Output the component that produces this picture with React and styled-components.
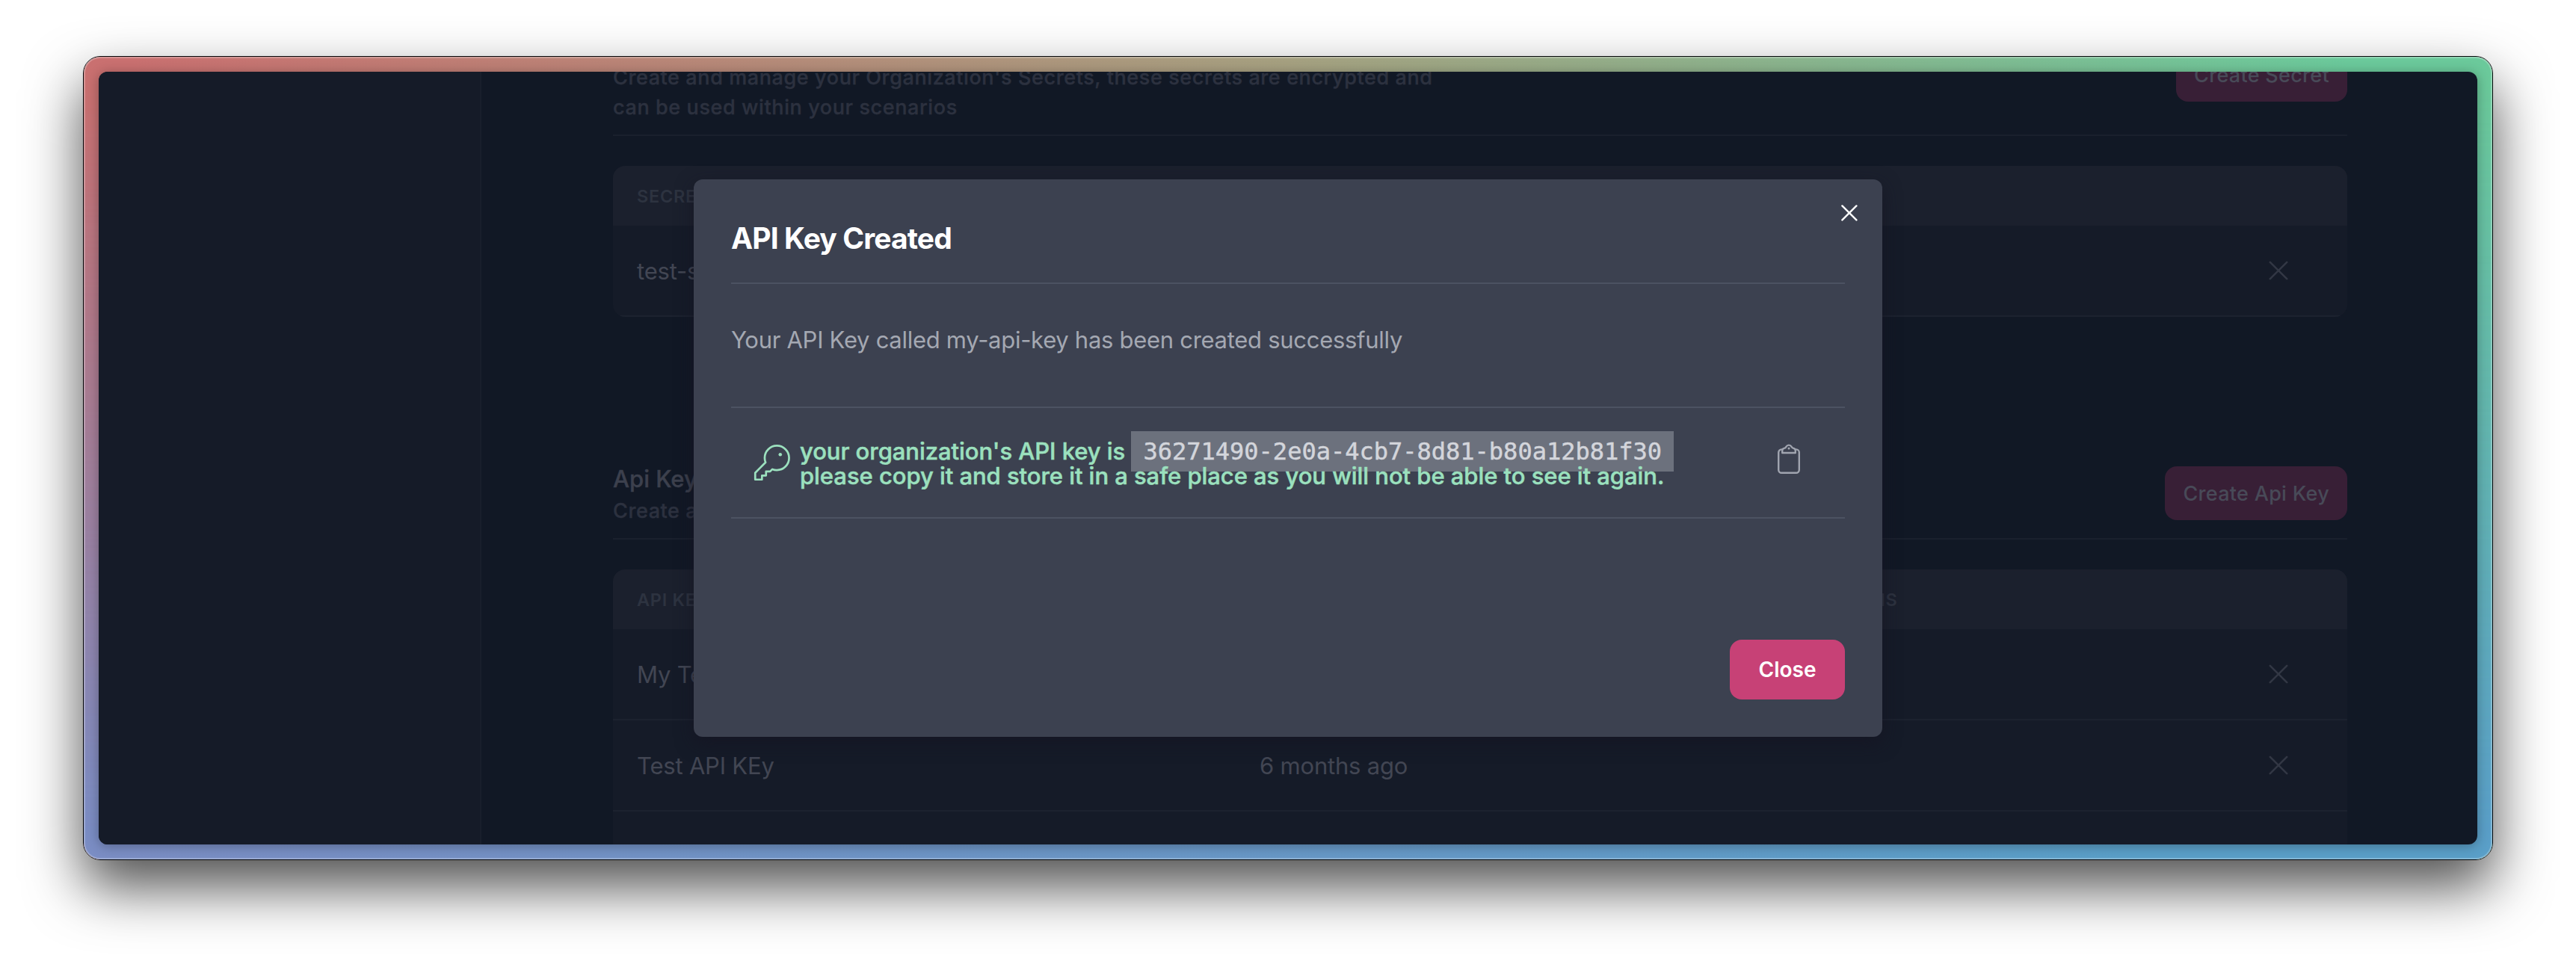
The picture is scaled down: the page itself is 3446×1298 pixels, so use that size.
import React from "react";
import styled, { createGlobalStyle } from "styled-components";

const GlobalStyle = createGlobalStyle`
  *, *::before, *::after { box-sizing: border-box; }
  body {
    margin: 0;
    background: #fff;
    font-family: Inter, "Liberation Sans", sans-serif;
    -webkit-font-smoothing: antialiased;
  }
`;

const Desktop = styled.div`
  width: 3446px;
  height: 1298px;
  padding: 75px 111px 147px;
  overflow: hidden;
`;

const Window = styled.div`
  position: relative;
  height: 1076px;
  padding: 20px;
  border: 1px solid #07080a;
  border-radius: 23px;
  background: linear-gradient(90deg, #c97070 0%, #c97070 2%, #a5a080 50%, #6bc99b 94%, #6bc99b 100%) padding-box;
  box-shadow: 0 36px 76px rgba(0, 0, 0, 0.69);

  &::before {
    content: "";
    position: absolute;
    inset: 0;
    border-radius: 22px;
    background: linear-gradient(90deg, #7b8dc4, #5a9fc8 85%);
    mask-image: linear-gradient(180deg, transparent 4%, #000 96%);
  }

  &::after {
    content: "";
    position: absolute;
    inset: 0;
    border-radius: 22px;
    box-shadow: inset 0 0 0 2px rgba(255, 255, 255, 0.24);
  }
`;

const Screen = styled.div`
  position: relative;
  z-index: 1;
  display: flex;
  height: 1034px;
  border-radius: 12px;
  overflow: hidden;
  background: #111825;
`;

const ScreenShadow = styled.div`
  position: relative;
  z-index: 1;
  border-radius: 12px;
  box-shadow: 0 2px 16px rgba(0, 0, 0, 0.3);
`;

const Sidebar = styled.aside`
  flex: none;
  width: 512px;
  border-right: 2px solid #191f2c;
  background: #151b28;
`;

const Content = styled.main`
  flex: 1;
  min-width: 0;
  display: flex;
  flex-direction: column;
  gap: 192px;
  margin-top: -60px;
  padding: 0 174px 0 176px;
`;

const Section = styled.section`
  display: flex;
  flex-direction: column;
  gap: 40px;
`;

const SectionHeader = styled.header`
  display: flex;
  align-items: center;
  justify-content: space-between;
  padding-bottom: 16px;
  border-bottom: 2px solid #1a202d;
`;

const SectionIntro = styled.div`
  width: 1135px;
`;

const SectionTitle = styled.h3`
  height: 48px;
  margin: 0;
  font-size: 31px;
  font-weight: 500;
  line-height: 50px;
  -webkit-text-stroke: 0.4px;
  color: #3c404d;
`;

const SectionText = styled.p`
  margin: 0;
  font-size: 27px;
  font-weight: 500;
  line-height: 40px;
  letter-spacing: 0.6px;
  -webkit-text-stroke: 0.4px;
  color: #2c313f;
`;

const CreateButton = styled.button`
  flex: none;
  height: 72px;
  padding: 1px 24px 0;
  border: 0;
  border-radius: 16px;
  background: #381f36;
  color: #484a58;
  font: 500 27px/40px Inter, sans-serif;
  letter-spacing: 0.3px;
`;

const Table = styled.div`
  border-radius: 16px;
  overflow: hidden;
  background: #151b28;
`;

const TableRow = styled.div`
  display: grid;
  grid-template-columns: 833px 742px 1fr 36px;
  align-items: center;
  height: 122px;
  padding: 1px 74px 0 32px;
  border-bottom: 2px solid #1c222f;
  font-size: 31px;
  letter-spacing: -0.2px;
  color: #424653;
`;

const TableHead = styled(TableRow)`
  height: 80px;
  padding-top: 0;
  border-bottom: 0;
  background: #1b202d;
  font-size: 23.5px;
  font-weight: 600;
  letter-spacing: 0.7px;
  text-transform: uppercase;
  color: #2d3340;
`;

const RowIcon = styled.svg`
  grid-column: 4;
  width: 36px;
  height: 36px;
  margin-top: -1px;
  fill: none;
  stroke: #323744;
  stroke-width: 2.6;
  stroke-linecap: round;
`;

const Overlay = styled.div`
  position: absolute;
  inset: 0;
  display: flex;
  align-items: center;
  justify-content: center;
`;

const Modal = styled.div`
  position: relative;
  display: flex;
  flex-direction: column;
  width: 1590px;
  height: 746px;
  padding: 50px;
  border-radius: 12px;
  background: #3c4150;
  box-shadow: 0 8px 24px rgba(22, 20, 34, 0.7);
`;

const ModalTitle = styled.h2`
  height: 90px;
  margin: 0;
  border-bottom: 2px solid #4c5262;
  font-size: 39px;
  font-weight: 700;
  line-height: 58px;
  letter-spacing: -0.88px;
  color: #fff;
`;

const ModalText = styled.p`
  margin: 51px 0 65px;
  font-size: 31px;
  line-height: 48px;
  letter-spacing: -0.29px;
  color: #a4a8b2;
`;

const KeyPanel = styled.div`
  display: flex;
  align-items: center;
  height: 150px;
  padding: 2px 60px 0 25px;
  border: solid #4c5262;
  border-width: 2px 0;
`;

const KeyIcon = styled.svg`
  flex: none;
  width: 58px;
  height: 58px;
  margin-right: 9px;
  fill: none;
  stroke: #9be0be;
  stroke-width: 12;
  stroke-linecap: round;
  stroke-linejoin: round;
`;

const KeyText = styled.p`
  flex: 1;
  margin: 0;
  font-size: 31px;
  font-weight: 500;
  line-height: 33px;
  letter-spacing: -0.05px;
  -webkit-text-stroke: 0.5px;
  color: #9be0be;
`;

const KeyValue = styled.code`
  padding: 8px 16px;
  background: #6c717d;
  color: #d3d5db;
  font: 400 32px/1 "DejaVu Sans Mono", monospace;
  line-height: 0;
  letter-spacing: 0;
`;

const ClipboardIcon = styled.svg`
  flex: none;
  width: 30px;
  height: 40px;
  margin-bottom: 13px;
  fill: none;
  stroke: #a0a4af;
  stroke-width: 2.4;
  stroke-linejoin: round;
`;

const DismissIcon = styled.svg`
  position: absolute;
  top: 34px;
  right: 33px;
  width: 22px;
  height: 22px;
  stroke: #fff;
  stroke-width: 2.4;
  stroke-linecap: round;
`;

const CloseButton = styled.button`
  align-self: flex-end;
  width: 154px;
  height: 80px;
  margin-top: auto;
  border: 0;
  border-radius: 16px;
  background: #c74176;
  color: #fff;
  font: 600 28px/40px Inter, sans-serif;
`;

const secrets = [{ name: "test-secret" }];
const apiKeys = [
  { name: "My Test Key", created: "6 months ago" },
  { name: "Test API KEy", created: "6 months ago" },
];

function RemoveIcon() {
  return (
    <RowIcon viewBox="0 0 36 36">
      <path d="M6.8 6.8l22.4 22.4M29.2 6.8L6.8 29.2" />
    </RowIcon>
  );
}

function ResourceSection({ title, text, action, columns, rows, children }) {
  return (
    <Section>
      <SectionHeader>
        <SectionIntro>
          <SectionTitle>{title}</SectionTitle>
          <SectionText>{text}</SectionText>
        </SectionIntro>
        <CreateButton>{action}</CreateButton>
      </SectionHeader>
      <Table>
        <TableHead>
          {columns.map((column) => (
            <span key={column}>{column}</span>
          ))}
        </TableHead>
        {rows.map((row) => (
          <TableRow key={row.name}>
            <span>{row.name}</span>
            <span>{row.created}</span>
            <RemoveIcon />
          </TableRow>
        ))}
        {children}
      </Table>
    </Section>
  );
}

export default function App() {
  return (
    <>
      <GlobalStyle />
      <Desktop>
        <Window>
          <ScreenShadow>
            <Screen>
              <Sidebar />
              <Content>
                <ResourceSection
                  text="Create and manage your Organization's Secrets, these secrets are encrypted and can be used within your scenarios"
                  action="Create Secret"
                  columns={["Secret"]}
                  rows={secrets}
                />
                <ResourceSection
                  title="Api Keys"
                  text="Create and manage your Organization's Api Keys"
                  action="Create Api Key"
                  columns={["API Key", "Created", "Actions"]}
                  rows={apiKeys}
                >
                  <TableRow />
                </ResourceSection>
              </Content>
              <Overlay>
                <Modal role="dialog">
                  <DismissIcon viewBox="0 0 22 22">
                    <path d="M1.4 1.4l19 19M20.4 1.4l-19 19" />
                  </DismissIcon>
                  <ModalTitle>API Key Created</ModalTitle>
                  <ModalText>
                    Your API Key called my-api-key has been created successfully
                  </ModalText>
                  <KeyPanel>
                    <KeyIcon viewBox="0 0 256 256">
                      <path d="M93.2 122.8A70.3 70.3 0 0 1 88 96a72 72 0 1 1 72 72 70.3 70.3 0 0 1-26.8-5.2L120 176H96v24H72v24H32v-40z" />
                      <circle cx="180" cy="76" r="10" fill="#9be0be" stroke="none" />
                    </KeyIcon>
                    <KeyText>
                      your organization's API key is{" "}
                      <KeyValue>36271490-2e0a-4cb7-8d81-b80a12b81f30</KeyValue>
                      <br />
                      please copy it and store it in a safe place as you will not be able to see it again.
                    </KeyText>
                    <ClipboardIcon viewBox="0 0 30 40">
                      <path d="M6.4 7.4H5.2a4 4 0 0 0-4 4v23.4a4 4 0 0 0 4 4h19.6a4 4 0 0 0 4-4V11.4a4 4 0 0 0-4-4h-1.2" />
                      <path d="M6.2 12h17.6V9.3c0-2.3-1-3-2.6-3.4-1.6-.4-2.1-1.1-2.8-2.3a3.9 3.9 0 0 0-6.8 0c-.7 1.2-1.2 1.9-2.8 2.3-1.6.4-2.6 1.1-2.6 3.4z" />
                      <circle cx="15" cy="6" r="1.5" fill="#a0a4af" stroke="none" />
                    </ClipboardIcon>
                  </KeyPanel>
                  <CloseButton>Close</CloseButton>
                </Modal>
              </Overlay>
            </Screen>
          </ScreenShadow>
        </Window>
      </Desktop>
    </>
  );
}
